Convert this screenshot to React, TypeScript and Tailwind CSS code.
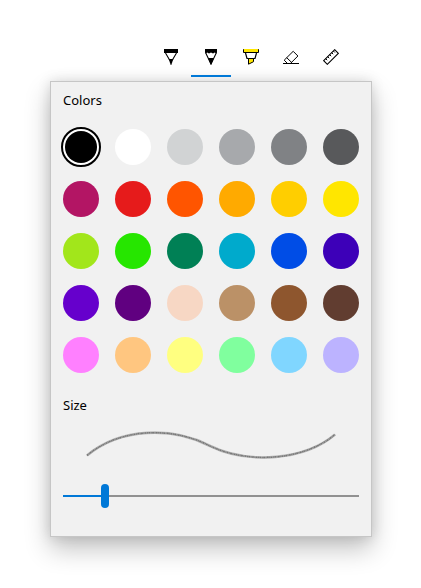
import React from "react";

const COLORS = [
  "#000000", "#ffffff", "#d1d3d4", "#a7a9ac", "#808285", "#58595b",
  "#b31564", "#e61b1b", "#ff5500", "#ffaa00", "#ffce00", "#ffe600",
  "#a2e61b", "#26e600", "#008055", "#00aacc", "#004de6", "#3d00b8",
  "#6600cc", "#600080", "#f7d7c4", "#bb9167", "#8e562e", "#613d30",
  "#ff80ff", "#ffc680", "#ffff80", "#80ff9e", "#80d6ff", "#bcb3ff",
];

function PenIcon() {
  return (
    <svg width="16" height="16" viewBox="0 0 16 16" fill="none">
      <path d="M1 0h14v4H1z" fill="#000" />
      <path d="M2.500 4l4.100 7h2.800l4.100-7" stroke="#000" strokeWidth="1.100" />
      <path d="M5.700 10h4.600L8.300 16h-.6z" fill="#000" />
    </svg>
  );
}

function PencilIcon() {
  return (
    <svg width="16" height="16" viewBox="0 0 16 16" fill="none">
      <path d="M2 0h12v3.600l-1 .9-1.200-1-1.800 1-2-1-2 1-1.800-1-1.200 1-1-.9z" fill="#000" />
      <path d="M2.500 3.500L8 15l5.500-11.500" stroke="#000" strokeWidth="1.100" />
      <path d="M5 9h6L8.300 15.600h-.6z" fill="#000" />
    </svg>
  );
}

function HighlighterIcon() {
  return (
    <svg width="16" height="16" viewBox="0 0 16 16" fill="none">
      <path d="M.5.500h15v3H.5z" fill="#ffe600" stroke="#000" />
      <path d="M1 0h14v3H1z" fill="#ffe600" />
      <path d="M2.500 4l1.500 5.500h8L13.500 4" stroke="#000" strokeWidth="1.200" />
      <path d="M5.500 9.500h5v3.200l-5 2.500z" fill="#ffe600" stroke="#000" />
    </svg>
  );
}

function EraserIcon() {
  return (
    <svg width="16" height="16" viewBox="0 0 16 16" fill="none" stroke="#000">
      <path d="M4.500 14.500L1.200 11.200 10.200 2.300l4.700 4.700-7.500 7.500M3.700 8.700l5.100 4.900" />
      <path d="M0 14.500h16" />
    </svg>
  );
}

function RulerIcon() {
  return (
    <svg width="16" height="16" viewBox="0 0 16 16" fill="none" stroke="#000">
      <path d="M.7 11.700L11.700.7l3.600 3.600L4.300 15.300z" strokeWidth="1.100" />
      <path d="M2.700 9.700l1.500 1.500M4.700 7.700l1.500 1.500M6.700 5.700l1.500 1.500M8.700 3.700l1.500 1.500M10.400 2l1.500 1.500" />
    </svg>
  );
}

const TOOLS = [
  { name: "Pen", Icon: PenIcon },
  { name: "Pencil", Icon: PencilIcon },
  { name: "Highlighter", Icon: HighlighterIcon },
  { name: "Eraser", Icon: EraserIcon },
  { name: "Ruler", Icon: RulerIcon },
];

const STROKE_PATH = "M4 29.500C38 1 90 1 126 19.500C166 39 222 34 252 8.500";

export default function App() {
  return (
    <div className="h-[588px] w-[421px] overflow-hidden bg-white pt-[37px] font-['Noto_Sans','Open_Sans',sans-serif] text-black">
      <div className="flex h-10 pl-[151px]">
        {TOOLS.map(({ name, Icon }) => (
          <button
            key={name}
            aria-label={name}
            className={`flex h-10 w-10 justify-center border-b-2 pt-3 ${name === "Pencil" ? "border-[#0078d7]" : "border-transparent"}`}
          >
            <Icon />
          </button>
        ))}
      </div>
      <div className="mt-1 ml-[50px] h-[456px] w-[322px] border border-[#c6c6c6] bg-[#f1f1f1] px-3 pt-2 shadow-[0_12px_24px_rgba(0,0,0,0.24),0_0_12px_rgba(0,0,0,0.13)]">
        <h2 className="h-5 text-[13px] leading-5">Colors</h2>
        <div className="mt-[19px] grid grid-cols-[repeat(6,36px)] gap-4">
          {COLORS.map((color, i) =>
            i === 0 ? (
              <div key={color} className="-m-0.5 size-10 rounded-full border-2 border-black bg-white p-0.5">
                <div className="size-8 rounded-full bg-black" />
              </div>
            ) : (
              <div key={color} className="size-9 rounded-full" style={{ backgroundColor: color }} />
            ),
          )}
        </div>
        <h2 className="mt-[22px] h-5 text-[13px] leading-5">Size</h2>
        <svg className="mt-[11px] ml-5 block" width="256" height="36" viewBox="0 0 256 36" fill="none">
          <path d={STROKE_PATH} stroke="#b8b8b8" strokeWidth="2.600" />
          <path d={STROKE_PATH} stroke="#777" strokeWidth="1.500" strokeDasharray="1.800 .5 1 .4" />
        </svg>
        <div className="mt-[22px] flex h-6 items-center">
          <div className="h-0.5 w-[38px] bg-[#0078d7]" />
          <div className="h-6 w-2 rounded-full bg-[#0078d7]" />
          <div className="h-0.5 flex-1 bg-[#919191]" />
        </div>
      </div>
    </div>
  );
}
